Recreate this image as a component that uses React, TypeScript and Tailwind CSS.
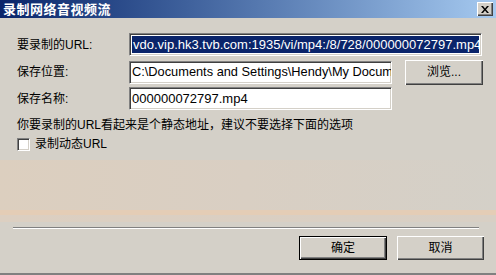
import React from 'react';

const font = { fontFamily: '"Liberation Sans", "Noto Sans CJK SC", sans-serif' };

const sunken =
  'border border-t-[#808080] border-l-[#808080] border-b-white border-r-white shadow-[inset_1px_1px_0_#404040,inset_-1px_-1px_0_#d4d0c8] bg-white';

const raised = 'bg-[#d4d0c8] shadow-[inset_1px_1px_0_#ffffff,inset_-1px_-1px_0_#404040,inset_-2px_-2px_0_#808080]';

function RaisedButton({ label, isDefault }: { label: string; isDefault?: boolean }) {
  return (
    <button
      className={
        'w-full h-[24px] flex items-center justify-center text-[12px] text-black ' +
        raised +
        (isDefault ? ' border border-black' : '')
      }
    >
      {label}
    </button>
  );
}

export default function App() {
  return (
    <div className="w-[496px] h-[275px] bg-[#d4d0c8] flex flex-col overflow-hidden text-black" style={font}>
      {/* title bar */}
      <div className="h-[18px] flex items-center justify-between pl-[3px] pr-[3px] bg-gradient-to-r from-[#0a246a] to-[#a6caf0]">
        <span className="text-white text-[13px] font-bold leading-none tracking-[0.5px]">录制网络音视频流</span>
        <div className={'w-[16px] h-[14px] flex items-center justify-center ' + raised}>
          <svg width="8" height="7" viewBox="0 0 8 7">
            <path d="M0 0h2l2 2.5L6 0h2L5 3.5 8 7H6L4 4.5 2 7H0l3-3.5z" fill="#000" />
          </svg>
        </div>
      </div>

      {/* form rows */}
      <div className="flex flex-col pl-[17px] pr-[13px] text-[12px]">
        <div className="mt-[15px] h-[23px] flex items-center">
          <span className="w-[112px]">要录制的URL:</span>
          <div className={'w-[353px] h-[23px] p-[2px] flex ' + sunken}>
            <div className="flex-1 bg-[#0a246a] text-white text-[13px] leading-[17px] whitespace-nowrap overflow-hidden pl-[1px]">
              vdo.vip.hk3.tvb.com:1935/vi/mp4:/8/728/000000072797.mp4
            </div>
          </div>
        </div>

        <div className="mt-[4px] h-[24px] flex items-center">
          <span className="w-[112px]">保存位置:</span>
          <div className={'w-[263px] h-[23px] px-[2px] flex items-center text-[12.8px] whitespace-nowrap overflow-hidden ' + sunken}>
            C:\Documents and Settings\Hendy\My Documents
          </div>
          <div className="ml-[13px] w-[78px]">
            <button className={'w-[78px] h-[25px] flex items-center justify-center text-[12px] ' + raised}>
              浏览...
            </button>
          </div>
        </div>

        <div className="mt-[3px] h-[23px] flex items-center">
          <span className="w-[112px]">保存名称:</span>
          <div className={'w-[263px] h-[23px] px-[2px] flex items-center text-[13px] whitespace-nowrap overflow-hidden ' + sunken}>
            000000072797.mp4
          </div>
        </div>

        <div className="mt-[7px] h-[16px] leading-[16px]">你要录制的URL看起来是个静态地址，建议不要选择下面的选项</div>

        <div className="mt-[3px] h-[16px] flex items-center">
          <div className={'w-[13px] h-[13px] ' + sunken}></div>
          <span className="ml-[5px]">录制动态URL</span>
        </div>
      </div>

      {/* faint background banding */}
      <div className="mt-[8px] h-[50px] bg-gradient-to-r from-[#dccfbf] via-[#d9cfc3] to-[#d4d0c8]"></div>
      <div className="h-[5px] bg-[#e4cdb6]"></div>
      <div className="h-[7px] bg-gradient-to-r from-[#dccfc1] to-[#d8cfc4]"></div>

      {/* separator */}
      <div className="mt-[5px] ml-[13px] w-[466px] h-[2px] border-t border-t-[#808080] border-b border-b-white"></div>

      {/* buttons */}
      <div className="mt-[7px] flex justify-end pr-[12px] gap-[10px]">
        <div className="w-[88px]">
          <RaisedButton label="确定" isDefault />
        </div>
        <div className="w-[87px]">
          <RaisedButton label="取消" />
        </div>
      </div>

      <div className="mt-auto h-[2px] bg-[#808080]"></div>
    </div>
  );
}
